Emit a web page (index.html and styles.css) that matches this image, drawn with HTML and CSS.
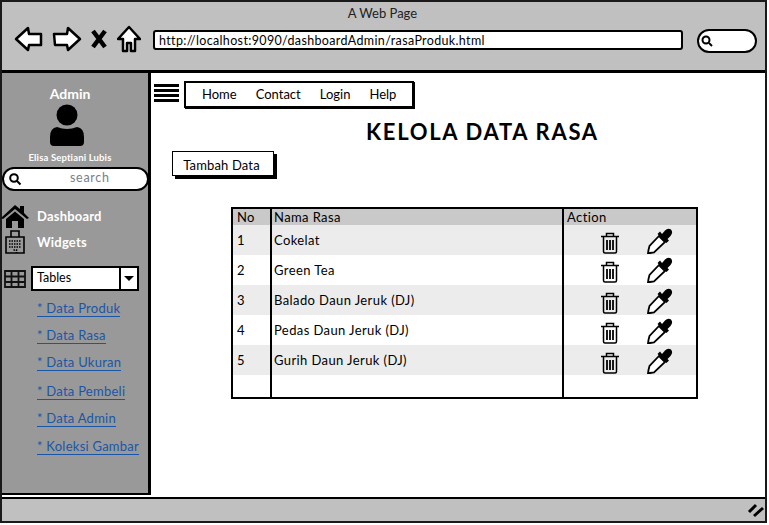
FILE: index.html
```html
<!DOCTYPE html>
<html lang="id">

<head>
    <meta charset="UTF-8">
    <meta name="viewport" content="width=device-width, initial-scale=1.0">
    <title>A Web Page</title>

    <link rel="stylesheet" href="styles.css">
</head>

<body>
    <div class="window">
        <header class="browser-bar">
            <div class="browser-title">A Web Page</div>
            <div class="browser-tools">
                <svg class="tool-icon" width="30" height="26" viewBox="0 0 30 26">
                    <path d="M2 13 L14 2 L15 8 L27 8 L27 19 L15 19 L14 24 Z" />
                </svg>
                <svg class="tool-icon" width="30" height="26" viewBox="0 0 30 26">
                    <path d="M28 13 L16 2 L15 8 L2 8 L3 19 L15 19 L16 24 Z" />
                </svg>
                <svg class="tool-x" width="18" height="22" viewBox="0 0 18 22">
                    <path d="M3 3 L15 19 M15 3 L3 19" />
                </svg>
                <svg class="tool-icon" width="24" height="28" viewBox="0 0 24 28">
                    <path d="M12 2 L23 14 L18 14 L18 26 L14 26 L14 18 L10 18 L10 26 L6 26 L6 14 L1 14 Z" />
                </svg>
                <div class="url-box">http://localhost:9090/dashboardAdmin/rasaProduk.html</div>
                <div class="browser-search">
                    <svg width="14" height="14" viewBox="0 0 14 14">
                        <circle cx="6" cy="6" r="3.5" class="lens" />
                        <path d="M9 9 L12 12" class="lens" />
                    </svg>
                </div>
            </div>
        </header>

        <div class="main-area">
            <aside class="sidebar">
                <div class="admin-name">Admin</div>
                <svg class="avatar" width="36" height="42" viewBox="0 0 36 42">
                    <circle cx="18" cy="11" r="10.5" />
                    <path d="M8 23 Q18 27 28 23 Q35 24 35 33 L35 38 Q35 42 31 42 L5 42 Q1 42 1 38 L1 33 Q1 24 8 23 Z" />
                </svg>
                <div class="admin-full">Elisa Septiani Lubis</div>
                <div class="side-search">
                    <svg width="14" height="14" viewBox="0 0 14 14">
                        <circle cx="6" cy="6" r="3.8" class="lens" />
                        <path d="M9 9 L12.5 12.5" class="lens" />
                    </svg>
                    <span>search</span>
                </div>

                <div class="side-item first">
                    <svg class="side-icon" width="28" height="24" viewBox="0 0 28 24">
                        <path d="M14 1 L19 5 L19 2 L23 2 L23 9 L28 14 L26 15 L14 5 L2 15 L0 14 Z" />
                        <path d="M5 15 L14 7.5 L23 15 L23 24 L17 24 L17 17 L11 17 L11 24 L5 24 Z" />
                    </svg>
                    <span>Dashboard</span>
                </div>
                <div class="side-item second">
                    <svg class="side-icon" width="28" height="24" viewBox="0 0 28 24">
                        <path class="hotel" d="M5 7 H23 V23 H5 Z M10 7 V1 H18 V7" />
                        <path class="hotel-dots" d="M8 11 H20 M8 14 H20 M8 17 H20 M12.5 20 H15.5 V23" />
                    </svg>
                    <span>Widgets</span>
                </div>
                <div class="side-tables">
                    <svg width="24" height="20" viewBox="0 0 24 20">
                        <path class="grid-lines" d="M2 2 H22 V18 H2 Z M2 7.5 H22 M2 13 H22 M8.5 2 V18 M15.5 2 V18" />
                    </svg>
                    <div class="tables-select">
                        <span class="tables-text">Tables</span>
                        <span class="tables-arrow"></span>
                    </div>
                </div>

                <nav class="side-links">
                    <a href="#" class="link-produk">* Data Produk</a>
                    <a href="#" class="link-rasa">* Data Rasa</a>
                    <a href="#" class="link-ukuran">* Data Ukuran</a>
                    <a href="#" class="link-pembeli">* Data Pembeli</a>
                    <a href="#" class="link-admin">* Data Admin</a>
                    <a href="#" class="link-gambar">* Koleksi Gambar</a>
                </nav>
            </aside>

            <main class="content">
                <div class="top-row">
                    <div class="burger"><i></i><i></i><i></i><i></i></div>
                    <nav class="top-nav">
                        <a href="#">Home</a>
                        <a href="#">Contact</a>
                        <a href="#">Login</a>
                        <a href="#">Help</a>
                    </nav>
                </div>

                <h1>KELOLA DATA RASA</h1>

                <button class="add-btn" type="button">Tambah Data</button>

                <table class="data-table">
                    <thead>
                        <tr>
                            <th class="col-no">No</th>
                            <th class="col-name">Nama Rasa</th>
                            <th class="col-action">Action</th>
                        </tr>
                    </thead>
                    <tbody>
                        <tr class="odd">
                            <td>1</td>
                            <td>Cokelat</td>
                            <td class="actions">
                                <svg class="trash" width="20" height="22" viewBox="0 0 20 22"><use href="#trash-icon" /></svg>
                                <svg class="dropper" width="26" height="26" viewBox="0 0 26 26"><use href="#dropper-icon" /></svg>
                            </td>
                        </tr>
                        <tr>
                            <td>2</td>
                            <td>Green Tea</td>
                            <td class="actions high">
                                <svg class="trash" width="20" height="22" viewBox="0 0 20 22"><use href="#trash-icon" /></svg>
                                <svg class="dropper" width="26" height="26" viewBox="0 0 26 26"><use href="#dropper-icon" /></svg>
                            </td>
                        </tr>
                        <tr class="odd">
                            <td>3</td>
                            <td>Balado Daun Jeruk (DJ)</td>
                            <td class="actions">
                                <svg class="trash" width="20" height="22" viewBox="0 0 20 22"><use href="#trash-icon" /></svg>
                                <svg class="dropper" width="26" height="26" viewBox="0 0 26 26"><use href="#dropper-icon" /></svg>
                            </td>
                        </tr>
                        <tr>
                            <td>4</td>
                            <td>Pedas Daun Jeruk (DJ)</td>
                            <td class="actions">
                                <svg class="trash" width="20" height="22" viewBox="0 0 20 22"><use href="#trash-icon" /></svg>
                                <svg class="dropper" width="26" height="26" viewBox="0 0 26 26"><use href="#dropper-icon" /></svg>
                            </td>
                        </tr>
                        <tr class="odd">
                            <td>5</td>
                            <td>Gurih Daun Jeruk (DJ)</td>
                            <td class="actions">
                                <svg class="trash" width="20" height="22" viewBox="0 0 20 22"><use href="#trash-icon" /></svg>
                                <svg class="dropper" width="26" height="26" viewBox="0 0 26 26"><use href="#dropper-icon" /></svg>
                            </td>
                        </tr>
                        <tr class="blank">
                            <td></td>
                            <td></td>
                            <td></td>
                        </tr>
                    </tbody>
                </table>
            </main>
        </div>

        <footer class="status-bar">
            <svg width="18" height="16" viewBox="0 0 18 16">
                <path class="grip" d="M2 10 L9 3 M7 14 L16 6" />
            </svg>
        </footer>
    </div>

    <svg class="icon-defs" width="0" height="0">
        <defs>
            <g id="trash-icon" fill="none" stroke="#000" stroke-width="1.5">
                <path d="M1 4.5 H19 M6.5 4 V1.5 H13.5 V4" />
                <path d="M3.5 5 V19.5 Q3.5 21 5 21 H15 Q16.5 21 16.5 19.5 V5" />
                <path d="M7 8 V18 M10 8 V18 M13 8 V18" stroke-width="1.8" />
            </g>
            <g id="dropper-icon">
                <path d="M15 6 L18 2.5 Q21 -0.5 24 1.5 Q26.5 4.5 23.5 8 L20.5 11 L22 12.5 L19.5 15 L10.5 6 L13 3.5 Z" fill="#000" />
                <path d="M12 8 L18 14 L7 24.5 L3 25 L1 25.5 L1.5 22 L2.5 18 Z" fill="#fff" stroke="#000" stroke-width="1.8" />
            </g>
        </defs>
    </svg>
</body>

</html>
```

FILE: styles.css
```css
* {
    box-sizing: border-box;
}

body {
    margin: 0;
    width: 769px;
    height: 525px;
    overflow: hidden;
    background-color: #ffffff;
    font-family: 'Lato', 'Open Sans', sans-serif;
    font-size: 13px;
    color: #000000;
}

.window {
    width: 767px;
    height: 523px;
    border: 2.5px solid #1a1a1a;
    display: flex;
    flex-direction: column;
}

/* browser chrome */
.browser-bar {
    height: 71px;
    flex: none;
    background-color: #c0c0c0;
    border-bottom: 3px solid #000000;
    padding-top: 4px;
}

.browser-title {
    text-align: center;
    font-size: 13px;
    line-height: 14px;
    color: #222222;
    padding-right: 2px;
}

.browser-tools {
    display: flex;
    align-items: center;
    margin-top: 5px;
    padding-left: 12px;
}

.tool-icon {
    margin-right: -1px;
    flex: none;
}

.tool-icon path {
    fill: #ffffff;
    stroke: #000000;
    stroke-width: 2.5;
    stroke-linejoin: round;
}

.tool-x {
    margin: 0 9px 0 9px;
    flex: none;
}

.tool-x path {
    fill: none;
    stroke: #000000;
    stroke-width: 4.5;
}

.tool-icon:nth-child(2) {
    margin-left: 9px;
}

.url-box {
    width: 530px;
    height: 20px;
    margin-left: 13px;
    margin-top: 2px;
    padding: 1px 0 0 4px;
    background-color: #ffffff;
    border: 2px solid #000000;
    border-radius: 3px;
    font-size: 12.5px;
    line-height: 16px;
    letter-spacing: 0.35px;
}

.browser-search {
    width: 60px;
    height: 24px;
    margin: 4px 0 0 14px;
    background-color: #ffffff;
    border: 2px solid #000000;
    border-radius: 12px;
    padding: 3px 0 0 1px;
}

.lens {
    fill: none;
    stroke: #000000;
    stroke-width: 2;
}

/* sidebar and content */
.main-area {
    flex: 1;
    display: flex;
    min-height: 0;
}

.sidebar {
    width: 149px;
    flex: none;
    background-color: #999999;
    border-right: 3px solid #000000;
    border-bottom: 2px solid #000000;
    color: #ffffff;
}

.admin-name {
    margin-top: 12px;
    text-align: center;
    font-size: 14px;
    line-height: 17px;
    font-weight: bold;
    padding-right: 10px;
}

.avatar {
    display: block;
    margin: 2px 0 0 47px;
}

.avatar circle,
.avatar path {
    fill: #000000;
}

.admin-full {
    margin-top: 6px;
    text-align: center;
    font-size: 9.5px;
    line-height: 11px;
    font-weight: bold;
    letter-spacing: 0.15px;
    padding-right: 10px;
    white-space: nowrap;
}

.side-search {
    width: 147px;
    height: 24px;
    margin-top: 4px;
    background-color: #ffffff;
    border: 2px solid #000000;
    border-radius: 12px;
    display: flex;
    align-items: center;
    padding: 0 0 4px 4px;
    color: #77808c;
    font-size: 12.5px;
    letter-spacing: 0.7px;
}

.side-search svg {
    margin-top: 4px;
}

.side-search span {
    margin-left: 48px;
}

.side-item {
    display: flex;
    align-items: center;
    font-size: 13px;
    font-weight: bold;
    letter-spacing: 0.2px;
}

.side-item span {
    margin-left: 8px;
}

.side-item.first {
    margin-top: 13px;
}

.side-item.second {
    margin-top: 2px;
}

.side-icon {
    margin-left: -1px;
}

.side-icon path {
    fill: #000000;
}

.side-icon .hotel {
    fill: #999999;
    stroke: #000000;
    stroke-width: 1.6;
}

.side-icon .hotel-dots {
    fill: none;
    stroke: #000000;
    stroke-width: 1.6;
    stroke-dasharray: 1.5 1;
}

.side-tables {
    display: flex;
    align-items: center;
    margin-top: 12px;
    padding-left: 1px;
}

.grid-lines {
    fill: none;
    stroke: #111111;
    stroke-width: 1.8;
}

.tables-select {
    width: 108px;
    height: 25px;
    margin-left: 4px;
    display: flex;
    background-color: #ffffff;
    border: 2px solid #000000;
    color: #000000;
    font-size: 12.5px;
    line-height: 20px;
}

.tables-text {
    flex: 1;
    padding-left: 4px;
}

.tables-arrow {
    width: 18px;
    border-left: 2px solid #000000;
    position: relative;
}

.tables-arrow::after {
    content: "";
    position: absolute;
    left: 3px;
    top: 8px;
    border-left: 5px solid transparent;
    border-right: 5px solid transparent;
    border-top: 5px solid #000000;
}

.side-links {
    padding-left: 35px;
    margin-top: 9px;
    display: flex;
    flex-direction: column;
    align-items: flex-start;
}

.side-links a {
    color: #1a56a8;
    font-size: 13px;
    line-height: 16px;
    letter-spacing: 0.25px;
    text-decoration: none;
    border-bottom: 1px solid #1a56a8;
    white-space: nowrap;
}

.side-links .link-rasa {
    margin-top: 10px;
}

.side-links .link-ukuran {
    margin-top: 10px;
}

.side-links .link-pembeli {
    margin-top: 12px;
}

.side-links .link-admin {
    margin-top: 10px;
}

.side-links .link-gambar {
    margin-top: 11px;
}

.content {
    flex: 1;
    padding: 8px 0 0 3px;
    min-width: 0;
}

.top-row {
    display: flex;
    align-items: flex-start;
}

.burger {
    width: 25px;
    margin-top: 3px;
}

.burger i {
    display: block;
    height: 3px;
    margin-bottom: 2px;
    background-color: #000000;
}

.top-nav {
    margin-left: 5px;
    width: 230px;
    height: 27px;
    border: 2px solid #000000;
    box-shadow: 1px 1px 0 #000000;
    display: flex;
    align-items: center;
    padding: 0 0 2px 16px;
    gap: 19px;
    font-size: 13px;
}

.top-nav a {
    color: #000000;
    text-decoration: none;
}

h1 {
    margin: 10px 0 0 0;
    padding-left: 212px;
    font-size: 22px;
    line-height: 28px;
    font-weight: bold;
    letter-spacing: 1.7px;
    white-space: nowrap;
}

.add-btn {
    display: block;
    margin: 5px 0 0 18px;
    width: 102px;
    height: 25px;
    padding: 2px 3px 0 0;
    background-color: #ffffff;
    border: 1.5px solid #000000;
    box-shadow: 3px 3px 0 #000000;
    font-family: inherit;
    font-size: 13px;
    letter-spacing: 0.15px;
    color: #000000;
}

.data-table {
    margin: 31px 0 0 77px;
    width: 467px;
    height: 192px;
    border-collapse: collapse;
    border: 2.5px solid #000000;
    table-layout: fixed;
    font-size: 13px;
    letter-spacing: 0.4px;
}

.data-table th {
    height: 15px;
    padding: 1px 2px 0;
    background-color: #c9c9c9;
    font-weight: normal;
    text-align: left;
    line-height: 15px;
}

.data-table th.col-action {
    padding-left: 3px;
}

.data-table td {
    height: 30px;
    padding: 0 2px 1px;
}

.data-table td:first-child,
.data-table th:first-child {
    padding-left: 4px;
}

.data-table .odd td {
    background-color: #ececec;
}

.data-table th + th,
.data-table td + td {
    border-left: 2px solid #000000;
}

.data-table .blank td {
    height: auto;
}

.col-no {
    width: 39px;
}

.col-action {
    width: 134px;
}

.data-table .actions {
    padding: 6px 0 0 36px;
}

.data-table .actions.high {
    padding-top: 4px;
}

.actions svg {
    vertical-align: middle;
}

.actions .dropper {
    margin-left: 23px;
    margin-top: -4px;
}

.status-bar {
    height: 24px;
    flex: none;
    margin-top: 2px;
    background-color: #c0c0c0;
    border-top: 2px solid #000000;
    display: flex;
    justify-content: flex-end;
    align-items: center;
    padding-right: 0;
}

.grip {
    fill: none;
    stroke: #000000;
    stroke-width: 3;
}

.icon-defs {
    position: absolute;
}
```
